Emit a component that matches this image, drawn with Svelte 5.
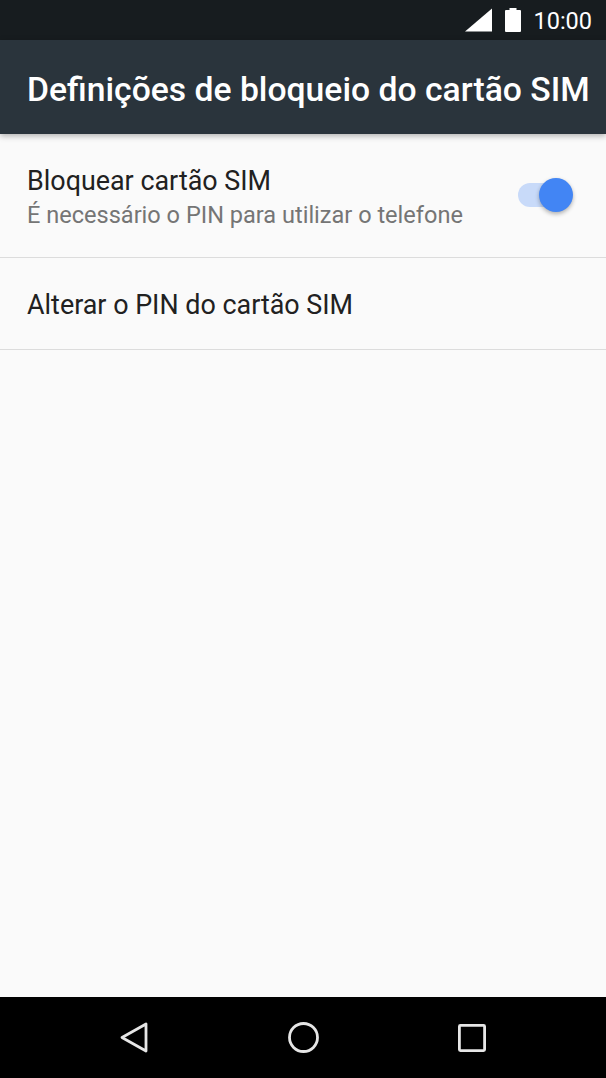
<script>
  const rows = [
    { title: 'Bloquear cartão SIM', sub: 'É necessário o PIN para utilizar o telefone', toggle: true },
    { title: 'Alterar o PIN do cartão SIM' }
  ];
</script>

<div class="screen">
  <div class="status">
    <svg class="signal" width="27" height="24" viewBox="0 0 27 24"><path d="M0 23.5 L27 0.5 V23.5 Z" fill="#fff"/></svg>
    <svg class="battery" width="16" height="24" viewBox="0 0 16 24"><path d="M4.5 0 H11.5 V2 H15 A1 1 0 0 1 16 3 V23 A1 1 0 0 1 15 24 H1 A1 1 0 0 1 0 23 V3 A1 1 0 0 1 1 2 H4.5 Z" fill="#fff"/></svg>
    <span class="time">10:00</span>
  </div>
  <header class="bar"><h1>Definições de bloqueio do cartão SIM</h1></header>
  <main class="list">
    {#each rows as row}
      <div class="row" class:tall={row.sub}>
        <div class="text">
          <div class="title">{row.title}</div>
          {#if row.sub}<div class="sub">{row.sub}</div>{/if}
        </div>
        {#if row.toggle}
          <div class="switch"><span class="track"></span><span class="thumb"></span></div>
        {/if}
      </div>
    {/each}
  </main>
  <nav class="nav">
    <svg class="back" width="28" height="31" viewBox="0 0 28 31"><path d="M26 2 V29 L2 15.5 Z" fill="none" stroke="#e6e6e6" stroke-width="2.8" stroke-linejoin="round"/></svg>
    <svg class="home" width="31" height="31" viewBox="0 0 31 31"><circle cx="15.5" cy="15.5" r="14" fill="none" stroke="#e6e6e6" stroke-width="2.8"/></svg>
    <svg class="recent" width="28" height="28" viewBox="0 0 28 28"><rect x="1.4" y="1.4" width="25.2" height="25.2" rx="1" fill="none" stroke="#e6e6e6" stroke-width="2.8" stroke-linejoin="round"/></svg>
  </nav>
</div>

<style>
  :global(body) { margin: 0; background: #fafafa; }
  .screen {
    width: 606px; height: 1078px; display: flex; flex-direction: column;
    font-family: Roboto, "Noto Sans", sans-serif; background: #fafafa; overflow: hidden;
  }
  .status {
    height: 40px; flex: none; background: #171c1f; display: flex; align-items: center;
    justify-content: flex-end; padding-right: 14px; box-sizing: border-box; color: #fff;
  }
  .signal { margin-right: 13px; }
  .battery { margin-right: 12px; }
  .time { font-size: 23.5px; line-height: 40px; padding-top: 2px; }
  .bar {
    height: 94px; flex: none; background: #2a343c; display: flex; align-items: center;
    padding: 6px 0 0 27px; box-sizing: border-box; box-shadow: 0 2px 6px rgba(0,0,0,.3); position: relative; z-index: 1;
  }
  h1 { margin: 0; font-size: 33.7px; font-weight: 500; color: #fff; white-space: nowrap; line-height: 1; }
  .list { flex: 1; }
  .row {
    height: 92px; box-sizing: border-box; border-bottom: 1.5px solid #dcdcdc;
    display: flex; align-items: center; justify-content: space-between; padding: 0 33px 0 27px;
  }
  .row.tall { height: 123.5px; }
  .text { padding-top: 4px; }
  .tall .text { padding-top: 6px; }
  .title { font-size: 26.9px; line-height: 34px; color: #212121; }
  .sub { font-size: 23.55px; line-height: 34px; color: #757575; }
  .switch { position: relative; width: 55px; height: 36px; }
  .track {
    position: absolute; left: 0; top: 6px; width: 50px; height: 24px; border-radius: 12px;
    background: #c8daf9;
  }
  .thumb {
    position: absolute; right: 0; top: 1px; width: 34px; height: 34px; border-radius: 50%;
    background: #4285f4; box-shadow: 0 2px 4px rgba(0,0,0,.3);
  }
  .nav {
    height: 81px; flex: none; background: #000; display: flex; align-items: center;
    justify-content: space-between; padding: 0 120px 0 120px; box-sizing: border-box;
  }
</style>
